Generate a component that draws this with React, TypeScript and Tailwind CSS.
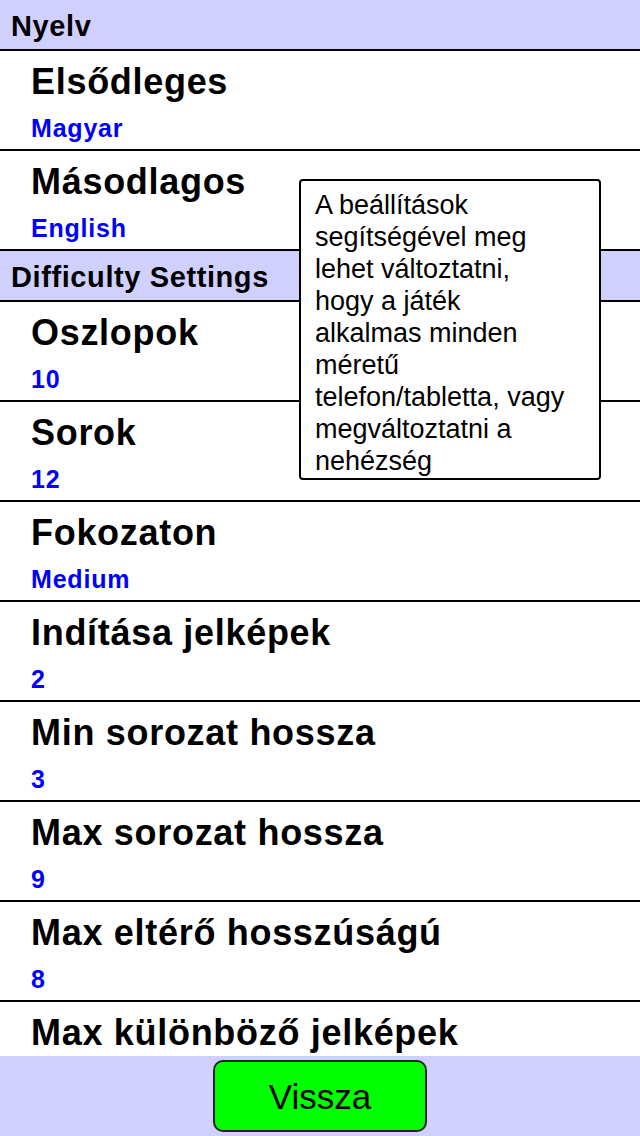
const sections = [
  {
    title: "Nyelv",
    rows: [
      { label: "Elsődleges", value: "Magyar" },
      { label: "Másodlagos", value: "English" },
    ],
  },
  {
    title: "Difficulty Settings",
    rows: [
      { label: "Oszlopok", value: "10" },
      { label: "Sorok", value: "12" },
      { label: "Fokozaton", value: "Medium" },
      { label: "Indítása jelképek", value: "2" },
      { label: "Min sorozat hossza", value: "3" },
      { label: "Max sorozat hossza", value: "9" },
      { label: "Max eltérő hosszúságú", value: "8" },
      { label: "Max különböző jelképek", value: "" },
    ],
  },
];

export default function App() {
  return (
    <div className="relative flex flex-col w-[640px] h-[1136px] bg-white overflow-hidden font-['Liberation_Sans',Arial,sans-serif] text-black">
      <div className="h-[1056px] overflow-hidden">
        {sections.map((s) => (
          <div key={s.title}>
            <div className="h-[51px] bg-[#d0d0ff] border-b-2 border-black pl-[11px] pt-[9px] text-[29px] leading-[34px] font-bold tracking-[0.6px]">
              {s.title}
            </div>
            {s.rows.map((r) => (
              <div key={r.label} className="h-[100px] border-b-2 border-black pl-[31px] pt-[11px]">
                <p className="text-[36px] leading-[40px] font-bold tracking-[0.7px]">{r.label}</p>
                {r.value && (
                  <p className="mt-[11px] text-[25px] leading-[30px] font-bold tracking-[0.8px] text-[#0000ff]">
                    {r.value}
                  </p>
                )}
              </div>
            ))}
          </div>
        ))}
      </div>

      <div className="flex-1 bg-[#d0d0ff] flex justify-center pt-[4px]">
        <button className="w-[214px] h-[72px] bg-[#00ff00] border-2 border-[#222] rounded-[10px] text-[35px] leading-none text-black">
          Vissza
        </button>
      </div>

      <div className="absolute left-[299px] top-[179px] w-[302px] h-[301px] bg-white border-2 border-black rounded-[4px] pl-[14px] pt-[8px]">
        <p className="w-[255px] text-[27px] leading-[32px]">
          A beállítások segítségével meg lehet változtatni, hogy a játék alkalmas minden méretű
          telefon/tabletta, vagy megváltoztatni a nehézség
        </p>
      </div>
    </div>
  );
}
